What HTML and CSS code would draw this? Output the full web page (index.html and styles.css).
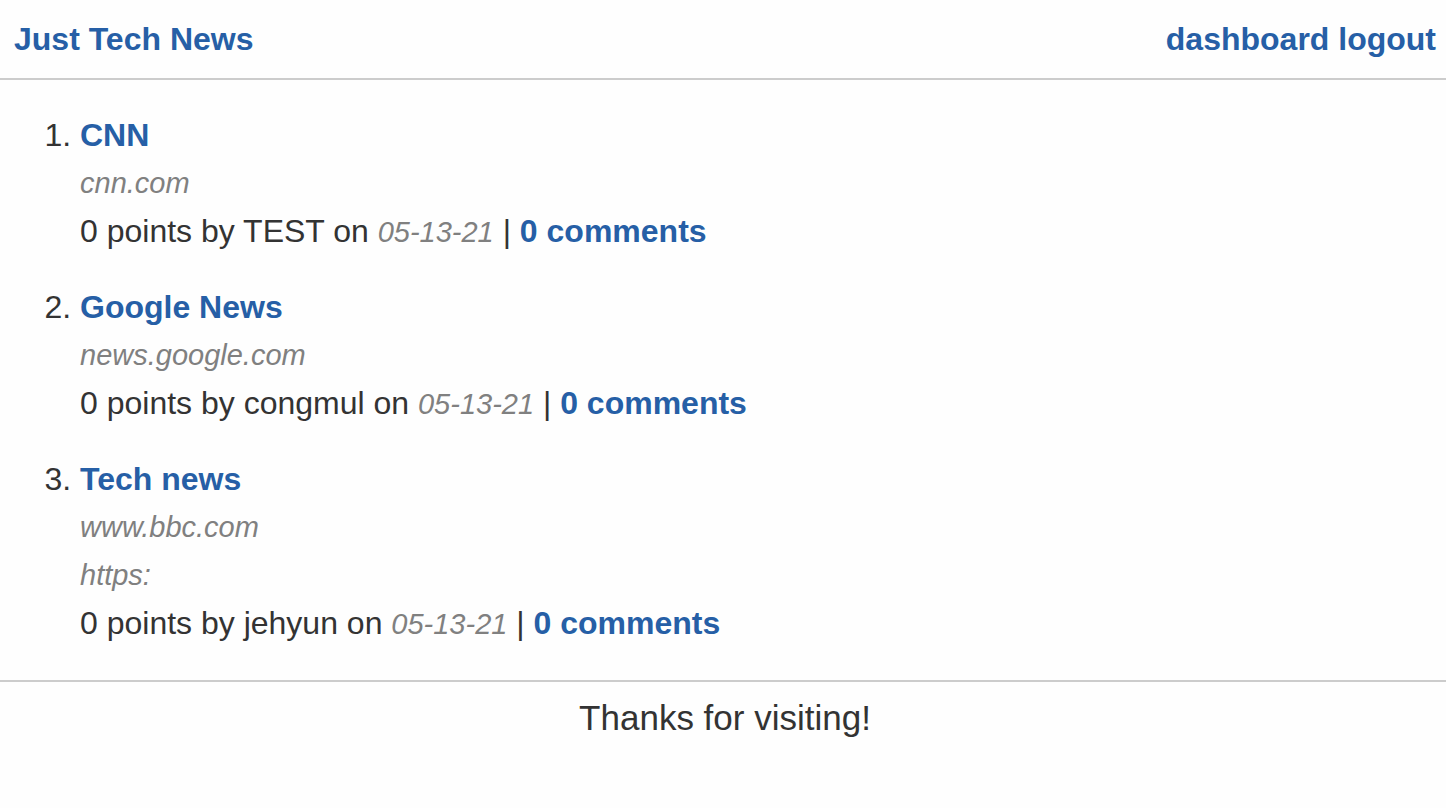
FILE: index.html
```html
<!DOCTYPE html>
<html lang="en">
<head>
<meta charset="utf-8">
<meta name="viewport" content="width=device-width, initial-scale=1">
<title>Just Tech News</title>
<link rel="stylesheet" href="styles.css">
</head>
<body>
<header class="site-header">
  <h1 class="brand"><a href="/">Just Tech News</a></h1>
  <nav class="site-nav">
    <a href="/dashboard">dashboard</a>
    <a href="/logout">logout</a>
  </nav>
</header>
<main>
  <ol class="post-list">
    <li class="post">
      <div class="title"><a href="https://cnn.com">CNN</a></div>
      <div class="source">cnn.com</div>
      <div class="meta">0 points by TEST on <span class="date">05-13-21</span> | <a href="/post/1">0 comments</a></div>
    </li>
    <li class="post">
      <div class="title"><a href="https://news.google.com">Google News</a></div>
      <div class="source">news.google.com</div>
      <div class="meta">0 points by congmul on <span class="date">05-13-21</span> | <a href="/post/2">0 comments</a></div>
    </li>
    <li class="post">
      <div class="title"><a href="https://www.bbc.com">Tech news</a></div>
      <div class="source">www.bbc.com</div>
      <div class="source">https:</div>
      <div class="meta">0 points by jehyun on <span class="date">05-13-21</span> | <a href="/post/3">0 comments</a></div>
    </li>
  </ol>
</main>
<footer class="site-footer">Thanks for visiting!</footer>
</body>
</html>
```
FILE: styles.css
```css
* {
  box-sizing: border-box;
}

body {
  margin: 0;
  background: #fefefe;
  color: #333;
  font-family: "Liberation Sans", Helvetica, Arial, sans-serif;
  font-size: 32px;
  line-height: 48px;
}

a {
  color: #265fa6;
  font-weight: bold;
  text-decoration: none;
}

.site-header {
  display: flex;
  justify-content: space-between;
  align-items: center;
  padding: 15px 10px 15px 14px;
  border-bottom: 2px solid #ccc;
}

.brand {
  margin: 0;
  font-size: 32px;
}

.post-list {
  margin: 0;
  padding: 31px 16px 33px 80px;
}

.post + .post {
  margin-top: 28px;
}

.source,
.date {
  color: #808080;
  font-size: 29px;
  font-style: italic;
}

.date {
  line-height: 1;
}

.site-footer {
  padding: 12px 12px 12px 16px;
  border-top: 2px solid #ccc;
  font-size: 35px;
  text-align: center;
}
```
